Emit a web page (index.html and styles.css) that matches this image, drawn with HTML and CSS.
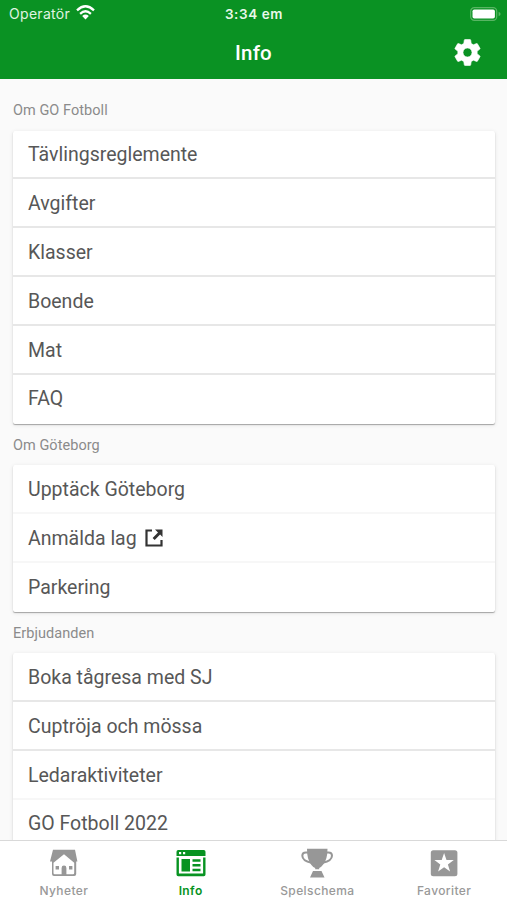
FILE: index.html
```html
<!DOCTYPE html>
<html lang="sv">
<head>
<meta charset="utf-8">
<title>Info</title>
<link rel="stylesheet" href="styles.css">
</head>
<body>
<div class="app">
  <header class="header">
    <div class="status">
      <div class="carrier"><span>Operatör</span>
        <svg class="wifi" width="19" height="15" viewBox="0 0 19 15"><g fill="none" stroke="#fff" stroke-width="2.3"><path d="M1 5.3Q9.5-2.700 18 5.300"/><path d="M4.100 8.800Q9.500 3.800 14.900 8.800"/></g><path d="M6.200 11Q9.500 8.200 12.800 11L9.500 14.400z" fill="#fff"/></svg>
      </div>
      <time class="clock">3:34 em</time>
      <svg class="battery" width="31" height="14" viewBox="0 0 31 14"><rect x=".7" y=".7" width="26" height="12.6" rx="3.6" fill="none" stroke="#58b563" stroke-width="1.2"/><rect x="2.5" y="2.5" width="22.4" height="9" rx="1.8" fill="#fff"/><path d="M28.6 4.8q2 .7 2 2.2t-2 2.200z" fill="#58b563"/></svg>
    </div>
    <div class="titlebar">
      <h1 class="title">Info</h1>
      <svg class="gear" width="31" height="31" viewBox="0 0 24 24"><path fill="#fff" stroke="#fff" stroke-width=".5" stroke-linejoin="round" d="M19.43 12.98c.04-.32.07-.64.07-.98s-.03-.66-.07-.98l2.11-1.65c.19-.15.24-.42.12-.64l-2-3.46c-.12-.22-.39-.3-.61-.22l-2.49 1c-.52-.4-1.08-.73-1.69-.98l-.38-2.65C14.46 2.18 14.25 2 14 2h-4c-.25 0-.46.18-.49.42l-.38 2.65c-.61.25-1.17.59-1.69.98l-2.49-1c-.23-.09-.49 0-.61.22l-2 3.46c-.13.22-.07.49.12.64l2.11 1.65c-.04.32-.07.65-.07.98s.03.66.07.98l-2.11 1.65c-.19.15-.24.42-.12.64l2 3.46c.12.22.39.3.61.22l2.49-1c.52.4 1.08.73 1.69.98l.38 2.65c.03.24.24.42.49.42h4c.25 0 .46-.18.49-.42l.38-2.65c.61-.25 1.17-.59 1.69-.98l2.49 1c.23.09.49 0 .61-.22l2-3.46c.12-.22.07-.49-.12-.64l-2.11-1.65zM12 15.5c-1.93 0-3.5-1.57-3.5-3.5s1.57-3.5 3.5-3.5 3.5 1.57 3.5 3.5-1.57 3.5-3.5 3.5z"/></svg>
    </div>
  </header>
  <main class="content">
    <h2 class="label">Om GO Fotboll</h2>
    <ul class="card">
      <li class="row">Tävlingsreglemente</li>
      <li class="row">Avgifter</li>
      <li class="row">Klasser</li>
      <li class="row">Boende</li>
      <li class="row">Mat</li>
      <li class="row">FAQ</li>
    </ul>
    <h2 class="label">Om Göteborg</h2>
    <ul class="card">
      <li class="row faint">Upptäck Göteborg</li>
      <li class="row faint">Anmälda lag
        <svg class="external" width="18" height="18" viewBox="0 0 18 18"><path d="M7 1.500H1.500v15h15V11" fill="none" stroke="#333" stroke-width="2.200"/><path d="M10 .5h7.500V8l-2.400-2.400-5.400 5.400-2.100-2.100L13 3.500z" fill="#333"/></svg>
      </li>
      <li class="row">Parkering</li>
    </ul>
    <h2 class="label">Erbjudanden</h2>
    <ul class="card">
      <li class="row">Boka tågresa med SJ</li>
      <li class="row">Cuptröja och mössa</li>
      <li class="row faint">Ledaraktiviteter</li>
      <li class="row">GO Fotboll 2022</li>
    </ul>
  </main>
  <nav class="tabs">
    <div class="tab">
      <svg width="32" height="32" viewBox="0 0 32 32"><path fill="#979797" fill-rule="evenodd" d="M5 2.800h22l2.400 11.700h-1.200V27q0 2-2 2H6q-2 0-2-2V14.500H2Z M16 7.300L5.500 15.800V26q0 1.200 1.200 1.200H25q1.200 0 1.200-1.200V15.800Z"/><path fill="#979797" d="M13.600 28v-7q0-2.400 2.400-2.400t2.400 2.400v7zM7.600 19h3.400v3.400H7.600zM21 19h3.400v3.400H21z"/></svg>
      <span>Nyheter</span>
    </div>
    <div class="tab active">
      <svg width="32" height="32" viewBox="0 0 32 32"><path fill="#079321" fill-rule="evenodd" d="M3.200 3h25.600q1.700 0 1.700 1.700V9h-29V4.700Q1.500 3 3.200 3zM4 5v2.200h2.200V5zM8 5v2.200h2.200V5z"/><path fill="#079321" d="M1.500 10.500h2.400v16h24.200v-16h2.400v17q0 1.700-1.700 1.700H3.200q-1.700 0-1.700-1.700zM6.500 12H15v12.500H6.500zM17.500 12.300h8v2.500h-8zM17.500 17h8v2.500h-8zM17.500 21.700h8v2.500h-8z"/></svg>
      <span>Info</span>
    </div>
    <div class="tab">
      <svg width="32" height="32" viewBox="0 0 32 32"><path fill="#979797" d="M6 1.800h20.500q0 11-4.500 16-2 2.700-3.800 3.300v1.200h-4v-1.200q-2-.6-4-3.300Q6 13 6 1.800zM12 24h8.500l3 6.500H9z"/><path d="M7.500 5.500H4.800Q1.300 5.500 1.300 8.800 1.500 14 10.500 15.800M24.800 5.500h2.700q3.500 0 3.500 3.300-.2 5.200-9.200 7" fill="none" stroke="#979797" stroke-width="2"/></svg>
      <span>Spelschema</span>
    </div>
    <div class="tab">
      <svg width="32" height="32" viewBox="0 0 32 32"><rect x="2.800" y="3.200" width="26.600" height="26" rx="2.500" fill="#979797"/><path fill="#fff" d="M16.100 6l2.400 7h7.300l-5.900 4.400 2.200 7.200-6-4.400-6 4.400 2.200-7.200L6.400 13h7.300z"/></svg>
      <span>Favoriter</span>
    </div>
  </nav>
</div>
</body>
</html>
```

FILE: styles.css
```css
* { box-sizing: border-box; }
body { margin: 0; font-family: Roboto, sans-serif; color: #575757; }
.app { width: 507px; height: 900px; display: flex; flex-direction: column; overflow: hidden; background: #fafafa; }
.header { flex: none; height: 79px; background: #0a9223; color: #fff; }
.status { height: 27px; padding: 0 7px 0 9px; display: grid; grid-template-columns: 1fr auto 1fr; align-items: center; font-family: Inter, sans-serif; }
.carrier { display: flex; align-items: center; gap: 6px; font-size: 14px; letter-spacing: .3px; color: #e0f4e2; }
.wifi { margin-top: -2px; }
.clock { font-size: 13.5px; font-weight: 600; letter-spacing: .6px; color: #e9f8ea; margin-right: 1px; }
.battery { justify-self: end; margin-right: -1px; }
.titlebar { height: 52px; display: grid; grid-template-columns: 1fr auto 1fr; align-items: center; padding: 0 24px; }
.title { grid-column: 2; margin: 0; font-size: 20.500px; line-height: 24px; font-weight: 500; letter-spacing: .2px; }
.gear { justify-self: end; margin-top: -2px; }
.content { flex: 1; min-height: 0; overflow: hidden; padding: 10px 12px 0 13px; }
.label { height: 41.500px; margin: 0; line-height: 44px; font-size: 14.500px; font-weight: 400; color: #8b8b8b; letter-spacing: .05px; }
.card { margin: 0; padding: 0; list-style: none; background: #fff; border-radius: 2px; box-shadow: 0 1px 1px rgba(0,0,0,.3), 0 1px 4px rgba(0,0,0,.1); }
.row { height: 48.870px; display: flex; align-items: center; gap: 8px; padding: 1.500px 0 0 15px; font-size: 19.500px; letter-spacing: 0; border-bottom: 2px solid #e7e7e7; }
.row.faint { border-bottom-color: #f7f7f7; }
.row:last-child { border-bottom-color: transparent; }
.tabs { flex: none; height: 60px; display: grid; grid-template-columns: repeat(4, 1fr); background: #fff; border-top: 1px solid #d9d9d9; }
.tab { display: flex; flex-direction: column; align-items: center; padding: 6px 0 0 1px; font-family: Inter, sans-serif; font-size: 12px; line-height: 14px; font-weight: 500; letter-spacing: .4px; color: #999; }
.tab span { margin-top: 5px; }
.tab.active { color: #079321; font-weight: 600; }
```
